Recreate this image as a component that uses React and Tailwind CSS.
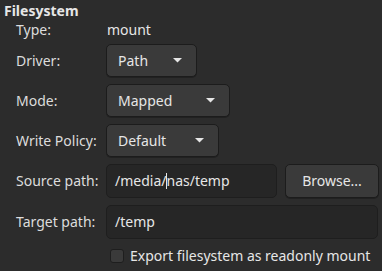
import React from "react";

function Arrow() {
  return (
    <svg width="9" height="5" viewBox="0 0 9 5" className="shrink-0">
      <path d="M0 0 L9 0 L4.5 4.5 Z" fill="#e6e6e6" />
    </svg>
  );
}

function Combo({ label, width }) {
  return (
    <div
      className={`flex h-[33px] items-center justify-between rounded-[5px] border border-[#1c1c1c] bg-[#3a3a3a] pl-[11px] pr-[14px] shadow-[0_1px_0_rgba(0,0,0,0.25)] ${width}`}
    >
      <span>{label}</span>
      <Arrow />
    </div>
  );
}

export default function App() {
  return (
    <div
      className="h-[271px] w-[382px] overflow-hidden bg-[#2c2c2c] text-[14px] leading-[20px] text-[#e6e6e6]"
      style={{ fontFamily: '"Noto Sans", "Open Sans", sans-serif' }}
    >
      <div className="h-[20px] pl-1 pt-px font-bold">Filesystem</div>
      <div className="grid grid-cols-[90px_1fr] items-center gap-y-[7px] pl-4 pr-1">
        <div className="-mb-[3px] text-[#dcdcdc]">Type:</div>
        <div className="-mb-[3px] pl-px">mount</div>

        <div className="text-[#dcdcdc]">Driver:</div>
        <Combo label="Path" width="w-[91px]" />

        <div className="text-[#dcdcdc]">Mode:</div>
        <Combo label="Mapped" width="w-[124px]" />

        <div className="text-[#dcdcdc]">Write Policy:</div>
        <Combo label="Default" width="w-[113px]" />

        <div className="text-[#dcdcdc]">Source path:</div>
        <div className="flex gap-2">
          <div className="flex h-[34px] w-[171px] items-center rounded-[5px] border border-[#1e1e1e] bg-[#262626] pl-2">
            <span>/media/</span>
            <span className="-mr-px inline-block h-[16px] w-px bg-[#e6e6e6]" />
            <span>nas/temp</span>
          </div>
          <div className="flex h-[34px] w-[94px] items-center justify-center rounded-[5px] border border-[#1c1c1c] bg-[#3a3a3a] shadow-[0_1px_0_rgba(0,0,0,0.25)]">
            Browse...
          </div>
        </div>

        <div className="text-[#dcdcdc]">Target path:</div>
        <div className="flex h-[34px] w-[272px] items-center rounded-[5px] border border-[#1e1e1e] bg-[#262626] pl-2">
          /temp
        </div>

        <div />
        <div className="flex items-center gap-[6px] pl-1">
          <div className="h-[14px] w-[14px] rounded-[3px] border border-[#1e1e1e] bg-[#3a3a3a]" />
          <span>Export filesystem as readonly mount</span>
        </div>
      </div>
    </div>
  );
}
